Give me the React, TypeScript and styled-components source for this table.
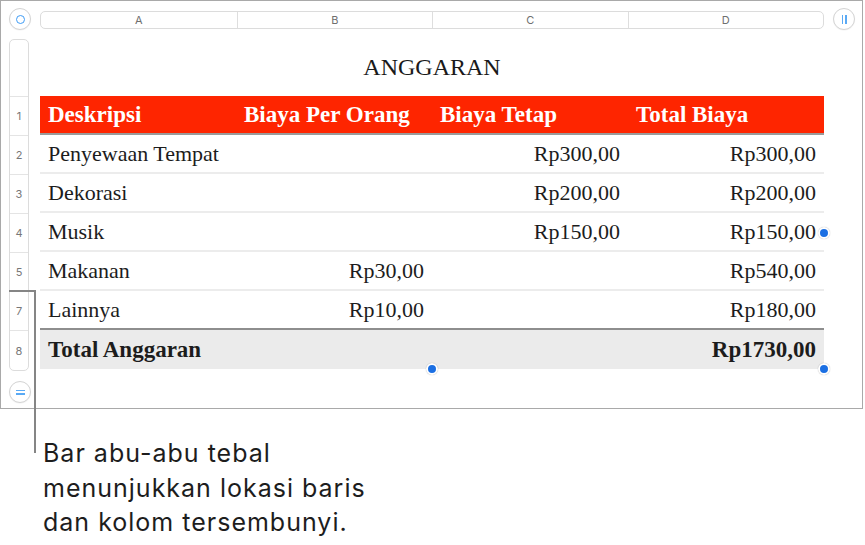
import React from "react";
import styled, { createGlobalStyle } from "styled-components";

const ROW_H = 39;
const COL_W = 196;
const TITLE_H = 57;

const GlobalStyle = createGlobalStyle`
  html, body { margin: 0; padding: 0; background: #fff; }
  body { width: 865px; height: 545px; overflow: hidden; }
  * { box-sizing: border-box; }
`;

const Page = styled.div`
  position: relative;
  width: 865px;
  height: 545px;
  display: flex;
  flex-direction: column;
  background: #fff;
`;

const Frame = styled.div`
  width: 863px;
  height: 409px;
  border: 1px solid #a9a9a9;
  display: grid;
  grid-template-columns: 39px ${COL_W * 4}px 1fr;
  grid-template-rows: 38px 1fr;
`;

const RoundButton = styled.div<{ $mt: number; $ml: number }>`
  width: 22px;
  height: 22px;
  border-radius: 50%;
  border: 1px solid #d4d4d4;
  background: #fff;
  display: flex;
  align-items: center;
  justify-content: center;
  margin: ${(p) => p.$mt}px 0 0 ${(p) => p.$ml}px;
  box-shadow: 0 0.5px 1px rgba(0, 0, 0, 0.06);
`;

const Ring = styled.div`
  width: 9px;
  height: 9px;
  border-radius: 50%;
  border: 1.5px solid #3f9cf5;
`;

const Bars = styled.div<{ $vertical: boolean }>`
  display: flex;
  flex-direction: ${(p) => (p.$vertical ? "row" : "column")};
  gap: 2px;
  & > span {
    display: block;
    background: #5aaaf5;
    width: ${(p) => (p.$vertical ? "1.5px" : "9px")};
    height: ${(p) => (p.$vertical ? "9px" : "1.5px")};
  }
`;

const ColumnHeader = styled.div`
  margin-top: 10px;
  height: 18px;
  border: 1px solid #dcdcdc;
  border-radius: 5px;
  display: grid;
  grid-template-columns: repeat(4, 1fr);
  background: #fff;
`;

const ColumnLabel = styled.div<{ $first: boolean }>`
  display: flex;
  align-items: center;
  justify-content: center;
  font-family: Inter, "Liberation Sans", sans-serif;
  font-size: 11px;
  color: #6f6f6f;
  border-left: ${(p) => (p.$first ? "none" : "1px solid #dedede")};
`;

const LeftGutter = styled.div`
  display: flex;
  flex-direction: column;
  padding-left: 8px;
`;

const RowHeader = styled.div`
  width: 20px;
  border: 1px solid #dcdcdc;
  border-radius: 5px;
  display: flex;
  flex-direction: column;
  background: #fff;
  overflow: hidden;
`;

const RowLabel = styled.div<{ $h: number; $last: boolean }>`
  height: ${(p) => p.$h}px;
  flex: none;
  display: flex;
  align-items: center;
  justify-content: center;
  font-family: Inter, "Liberation Sans", sans-serif;
  font-size: 11px;
  color: #777;
  border-bottom: ${(p) => (p.$last ? "none" : "1px solid #e4e4e4")};
`;

const Sheet = styled.div`
  display: flex;
  flex-direction: column;
`;

const Title = styled.div`
  height: ${TITLE_H}px;
  display: flex;
  align-items: center;
  justify-content: center;
  font-family: "Liberation Serif", serif;
  font-size: 24px;
  color: #1a1a1a;
`;

const Table = styled.div`
  position: relative;
  display: flex;
  flex-direction: column;
`;

type RowKind = "head" | "body" | "beforeTotal" | "total";

const Row = styled.div<{ $kind: RowKind }>`
  height: ${ROW_H}px;
  display: grid;
  grid-template-columns: repeat(4, ${COL_W}px);
  font-family: "Liberation Serif", serif;
  font-size: ${(p) => (p.$kind === "head" || p.$kind === "total" ? 23 : 22)}px;
  font-weight: ${(p) => (p.$kind === "head" || p.$kind === "total" ? 700 : 400)};
  color: ${(p) => (p.$kind === "head" ? "#fff" : "#1c1c1c")};
  background: ${(p) =>
    p.$kind === "head" ? "#fe2500" : p.$kind === "total" ? "#ebebeb" : "#fff"};
  border-bottom: ${(p) =>
    p.$kind === "head"
      ? "2px solid #9a9a9a"
      : p.$kind === "body"
      ? "2px solid #ececec"
      : p.$kind === "beforeTotal"
      ? "2px solid #8e8e8e"
      : "none"};
`;

const Cell = styled.div<{ $right: boolean }>`
  display: flex;
  align-items: center;
  justify-content: ${(p) => (p.$right ? "flex-end" : "flex-start")};
  padding: 0 8px;
  white-space: nowrap;
`;

const Handle = styled.div<{ $x: string; $y: string }>`
  position: absolute;
  left: ${(p) => p.$x};
  top: ${(p) => p.$y};
  width: 12px;
  height: 12px;
  border-radius: 50%;
  background: #1b6fe3;
  border: 2px solid #fff;
  box-shadow: 0 0 1px rgba(0, 0, 0, 0.35);
  transform: translate(-50%, -50%);
`;

const Callout = styled.div`
  margin: 27px 0 0 43px;
  font-family: Inter, "Liberation Sans", sans-serif;
  font-size: 25px;
  letter-spacing: 1px;
  line-height: 34.5px;
  color: #1d1d1d;
`;

const Leader = styled.div`
  position: absolute;
  left: 9px;
  top: 290px;
  width: 27px;
  height: 163px;
  border-top: 2px solid #858585;
  border-right: 2px solid #858585;
`;

const headers = ["Deskripsi", "Biaya Per Orang", "Biaya Tetap", "Total Biaya"];
const bodyRows = [
  ["Penyewaan Tempat", "", "Rp300,00", "Rp300,00"],
  ["Dekorasi", "", "Rp200,00", "Rp200,00"],
  ["Musik", "", "Rp150,00", "Rp150,00"],
  ["Makanan", "Rp30,00", "", "Rp540,00"],
  ["Lainnya", "Rp10,00", "", "Rp180,00"],
];
const totalRow = ["Total Anggaran", "", "", "Rp1730,00"];
const rowLabels = ["1", "2", "3", "4", "5", "7", "8"];

export default function App() {
  return (
    <>
      <GlobalStyle />
      <Page>
        <Frame>
          <RoundButton $mt={7} $ml={8}>
            <Ring />
          </RoundButton>
          <ColumnHeader>
            {["A", "B", "C", "D"].map((c, i) => (
              <ColumnLabel key={c} $first={i === 0}>
                {c}
              </ColumnLabel>
            ))}
          </ColumnHeader>
          <RoundButton $mt={7} $ml={9}>
            <Bars $vertical>
              <span />
              <span />
            </Bars>
          </RoundButton>

          <LeftGutter>
            <RowHeader>
              <RowLabel $h={TITLE_H} $last={false} />
              {rowLabels.map((l, i) => (
                <RowLabel key={l} $h={ROW_H} $last={i === rowLabels.length - 1}>
                  {l}
                </RowLabel>
              ))}
            </RowHeader>
            <RoundButton $mt={10} $ml={0}>
              <Bars $vertical={false}>
                <span />
                <span />
              </Bars>
            </RoundButton>
          </LeftGutter>

          <Sheet>
            <Title>ANGGARAN</Title>
            <Table>
              <Row $kind="head">
                {headers.map((h) => (
                  <Cell key={h} $right={false}>
                    {h}
                  </Cell>
                ))}
              </Row>
              {bodyRows.map((r, i) => (
                <Row key={r[0]} $kind={i === bodyRows.length - 1 ? "beforeTotal" : "body"}>
                  {r.map((v, j) => (
                    <Cell key={j} $right={j > 0}>
                      {v}
                    </Cell>
                  ))}
                </Row>
              ))}
              <Row $kind="total">
                {totalRow.map((v, j) => (
                  <Cell key={j} $right={j > 0}>
                    {v}
                  </Cell>
                ))}
              </Row>
              <Handle $x="100%" $y="50%" />
              <Handle $x="50%" $y="100%" />
              <Handle $x="100%" $y="100%" />
            </Table>
          </Sheet>
          <div />
        </Frame>
        <Callout>
          Bar abu-abu tebal
          <br />
          menunjukkan lokasi baris
          <br />
          dan kolom tersembunyi.
        </Callout>
        <Leader />
      </Page>
    </>
  );
}
